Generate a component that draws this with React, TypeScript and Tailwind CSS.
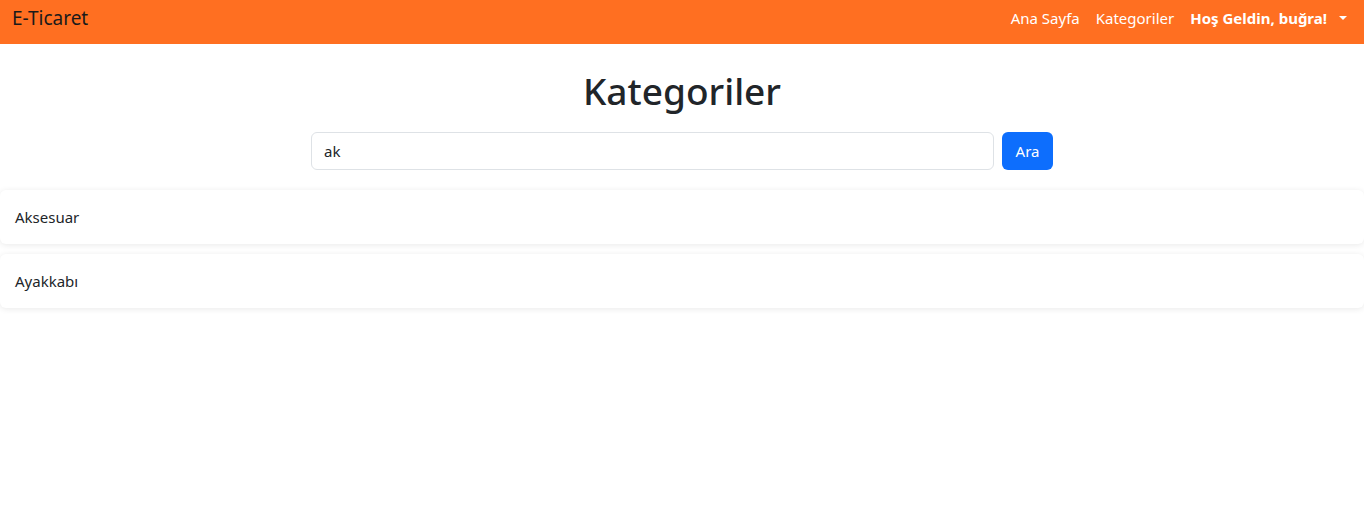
const categories = ['Aksesuar', 'Ayakkabı']

export default function App() {
  return (
    <div className="min-h-screen bg-white font-['Noto_Sans',sans-serif] text-[#212529]">
      {/* Navbar */}
      <nav className="flex h-[44px] items-center justify-between bg-[#ff6f21] pl-3 pr-[17px]">
        <a className="text-[19px] leading-none text-[#1a1a1a] -mt-[8px]">E-Ticaret</a>
        <div className="flex items-center gap-4 -mt-[8px] text-[15px] text-white">
          <a>Ana Sayfa</a>
          <a>Kategoriler</a>
          <a className="flex items-center gap-2 font-bold">
            Hoş Geldin, buğra!
            <span className="ml-1 border-x-[4px] border-t-[4px] border-x-transparent border-t-white" />
          </a>
        </div>
      </nav>

      <h1 className="mt-[25px] text-center text-[37px] font-medium leading-[1.2]">Kategoriler</h1>

      <form className="mx-auto mt-[19px] flex w-[742px] gap-2" onSubmit={(e) => e.preventDefault()}>
        <input
          defaultValue="ak"
          className="h-[38px] flex-1 rounded-md border border-[#dee2e6] px-3 text-[15px] outline-none"
        />
        <button type="submit" className="h-[38px] w-[51px] rounded-md bg-[#0d6efd] text-[15px] text-white">
          Ara
        </button>
      </form>

      <div className="mt-[20px] flex flex-col gap-[10px]">
        {categories.map((c) => (
          <div key={c} className="flex h-[54px] items-center rounded-md bg-white px-[15px] text-[15px] shadow-[0_1px_6px_rgba(0,0,0,0.09)]">
            {c}
          </div>
        ))}
      </div>
    </div>
  )
}
